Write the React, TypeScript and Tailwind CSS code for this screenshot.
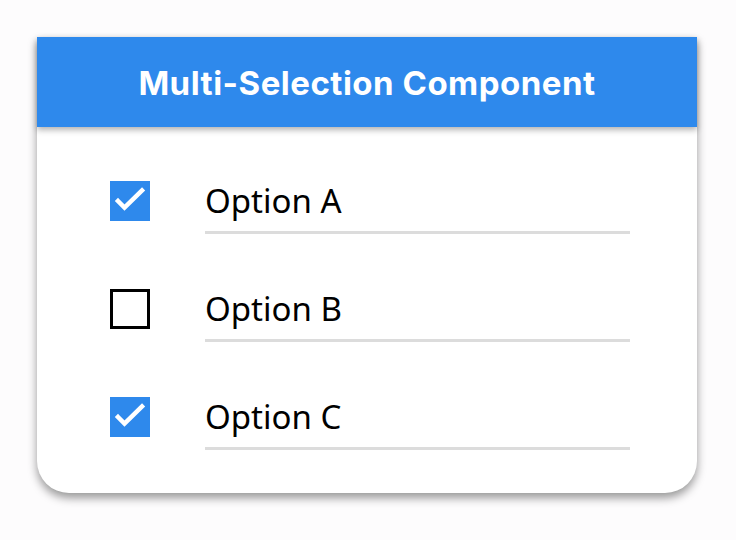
const options = [
  { label: "Option A", checked: true },
  { label: "Option B", checked: false },
  { label: "Option C", checked: true },
];

function CheckMark() {
  return (
    <svg width="40" height="40" viewBox="0 0 40 40" className="block">
      <rect width="40" height="40" fill="#2e89ec" />
      <polyline
        points="8,20 14.5,26.5 32,9.5"
        fill="none"
        stroke="#fff"
        strokeWidth="4.5"
        strokeLinecap="square"
      />
    </svg>
  );
}

export default function App() {
  return (
    <div className="min-h-screen w-full bg-[#fdfcfd] pt-[37px] px-[37px]">
      <div className="w-[660px] bg-white rounded-b-[32px] shadow-[0_5px_10px_rgba(0,0,0,0.4)]">
        <div className="h-[90px] pt-[3px] bg-[#2e89ec] flex items-center justify-center shadow-[0_3px_6px_rgba(0,0,0,0.3)]">
          <h1 className="text-white text-[33px] font-bold tracking-[0.5px] font-['Inter',sans-serif]">
            Multi-Selection Component
          </h1>
        </div>

        <div className="flex flex-col gap-[68px] pl-[73px] pt-[54px] pb-[56px]">
          {options.map((o) => (
            <div key={o.label} className="flex items-center h-[40px]">
              {o.checked ? (
                <CheckMark />
              ) : (
                <div className="w-[40px] h-[40px] border-[3px] border-black" />
              )}
              <div className="ml-[55px] w-[425px] relative">
                <span className="block text-[33px] text-black font-['Noto_Sans',sans-serif] leading-[40px]">
                  {o.label}
                </span>
                <div className="absolute left-0 right-0 top-[50px] h-[3px] bg-[#dcdcdc]" />
              </div>
            </div>
          ))}
        </div>
      </div>
    </div>
  );
}
